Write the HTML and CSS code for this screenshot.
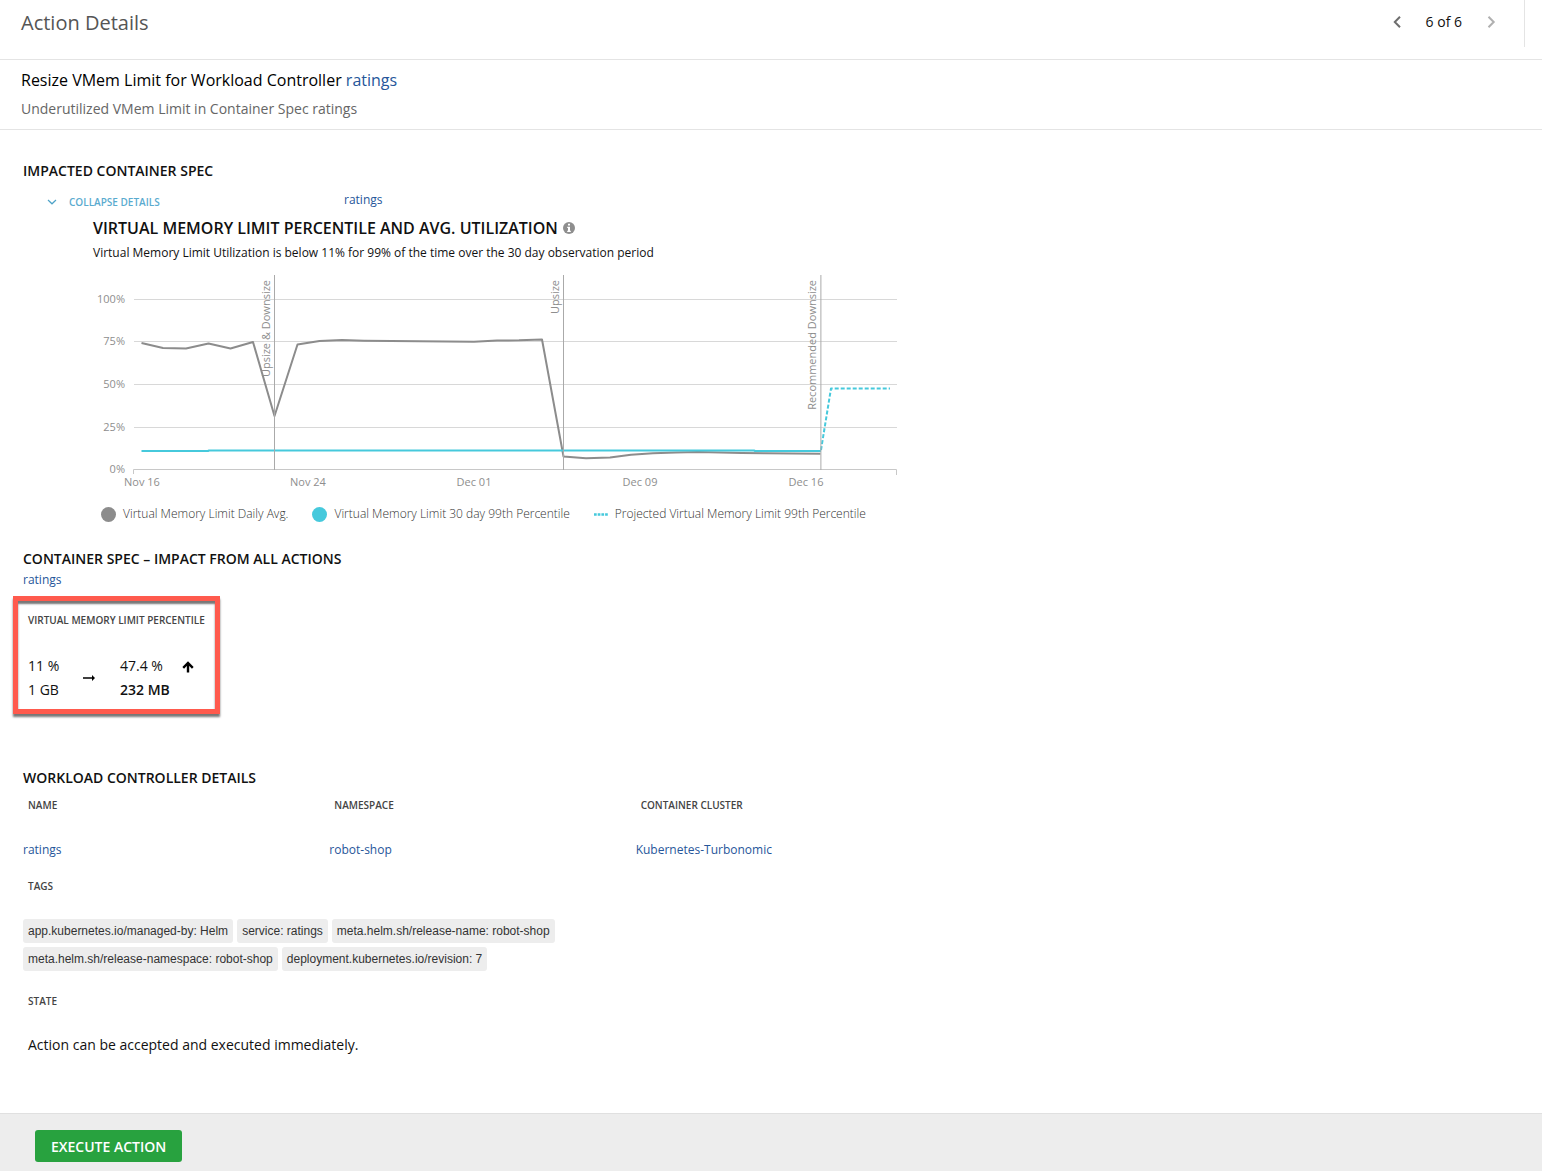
FILE: index.html
```html
<!DOCTYPE html>
<html lang="en">
<head>
<meta charset="utf-8">
<title>Action Details</title>
<link rel="stylesheet" href="styles.css">
</head>
<body>
<header class="topbar">
  <h1 class="topbar-title">Action Details</h1>
  <nav class="pager" aria-label="Actions">
    <button class="pager-button" type="button" aria-label="Previous action">
      <svg width="10" height="14" viewBox="0 0 10 14"><path d="M8 1.800 2.800 7 8 12.200" fill="none" stroke="#6e6e6e" stroke-width="2"/></svg>
    </button>
    <span class="pager-count">6 of 6</span>
    <button class="pager-button" type="button" aria-label="Next action" disabled>
      <svg width="10" height="14" viewBox="0 0 10 14"><path d="M2.500 1.800 7.700 7 2.500 12.200" fill="none" stroke="#b0b0b0" stroke-width="2"/></svg>
    </button>
  </nav>
</header>

<section class="summary">
  <h2 class="summary-title">Resize VMem Limit for Workload Controller <a class="link" href="#">ratings</a></h2>
  <p class="summary-text">Underutilized VMem Limit in Container Spec ratings</p>
</section>

<main class="content">
  <section class="impacted">
    <h3 class="section-title">IMPACTED CONTAINER SPEC</h3>
    <div class="spec-row">
      <button class="collapse" type="button">
        <svg width="10" height="6" viewBox="0 0 10 6"><path d="M1 1 5 4.800 9 1" fill="none" stroke="#4ea3c8" stroke-width="1.200"/></svg>
        COLLAPSE DETAILS
      </button>
      <a class="link" href="#">ratings</a>
    </div>

    <div class="chart">
      <h4 class="chart-title">VIRTUAL MEMORY LIMIT PERCENTILE AND AVG. UTILIZATION
        <svg class="info" width="12" height="12" viewBox="0 0 12 12"><circle cx="6" cy="6" r="6" fill="#8e8e8e"/><path d="M5 1.700h2v1.800H5zM4.200 4.700H7v4h.8V10H4.200V8.700H5V6h-.8z" fill="#fff"/></svg>
      </h4>
      <p class="chart-text">Virtual Memory Limit Utilization is below 11% for 99% of the time over the 30 day observation period</p>
      <svg class="plot" width="810" height="228" viewBox="90 265 810 228" role="img" aria-label="Memory limit utilization over time">
        <g class="grid">
          <path d="M134 299.500H897M134 341.500H897M134 384.500H897M134 427.500H897"/>
          <path class="axis" d="M133.500 474v-4.500H896.500V475"/>
        </g>
        <g class="tick tick-y">
          <text x="125" y="303">100%</text>
          <text x="125" y="345">75%</text>
          <text x="125" y="388">50%</text>
          <text x="125" y="431">25%</text>
          <text x="125" y="473">0%</text>
        </g>
        <g class="tick tick-x">
          <text x="142" y="486">Nov 16</text>
          <text x="308" y="486">Nov 24</text>
          <text x="474" y="486">Dec 01</text>
          <text x="640" y="486">Dec 09</text>
          <text x="806" y="486">Dec 16</text>
        </g>
        <polyline class="average" points="141.500,343 163,348 186,348.500 208.500,343.500 230.500,348.500 253,342 274.500,416 297.500,344.500 319.500,341 342,340 364,340.700 474,341.800 497,340.500 519,340.300 542,339.500 563.500,456.500 586,458.200 610,457.500 631,454.700 653,453.200 676,452.400 698,452 720,452.500 742,453 765,453.300 820.500,453.700"/>
        <polyline class="percentile" points="141.500,451 208,451 209,450.500 754,450.500 755,451 821,451"/>
        <polyline class="projected" points="821,450 831,388.500 890,388.500"/>
        <path class="marker" d="M274.500 275V470M563.500 275V470M820.900 275V470"/>
        <g class="marker-label">
          <text transform="translate(270 280) rotate(-90)">Upsize &amp; Downsize</text>
          <text transform="translate(559 280) rotate(-90)">Upsize</text>
          <text transform="translate(816 280) rotate(-90)">Recommended Downsize</text>
        </g>
      </svg>
      <ul class="legend">
        <li><span class="dot dot-average"></span>Virtual Memory Limit Daily Avg.</li>
        <li><span class="dot dot-percentile"></span>Virtual Memory Limit 30 day 99th Percentile</li>
        <li><svg width="14" height="3" viewBox="0 0 14 3"><path d="M0 1.500H14" stroke="#46c9dc" stroke-width="2.500" stroke-dasharray="2.700 1"/></svg>Projected Virtual Memory Limit 99th Percentile</li>
      </ul>
    </div>
  </section>

  <section class="impact">
    <h3 class="section-title">CONTAINER SPEC – IMPACT FROM ALL ACTIONS</h3>
    <p class="impact-target"><a class="link" href="#">ratings</a></p>
    <div class="change">
      <h4 class="label">VIRTUAL MEMORY LIMIT PERCENTILE</h4>
      <div class="change-values">
        <div class="change-from"><span>11 %</span><span>1 GB</span></div>
        <svg class="arrow-right" width="12" height="6" viewBox="0 0 12 6"><path d="M0 2.200H9V0l3 3-3 3V3.800H0z"/></svg>
        <div class="change-to"><span>47.4 %</span><strong>232 MB</strong></div>
        <svg class="arrow-up" width="12" height="12" viewBox="0 0 12 12"><path d="M6 2V11.500M1.200 6.800 6 2l4.800 4.800" fill="none" stroke="#000" stroke-width="2.400"/></svg>
      </div>
    </div>
  </section>

  <section class="details">
    <h3 class="section-title">WORKLOAD CONTROLLER DETAILS</h3>
    <table class="facts">
      <thead><tr><th class="label">NAME</th><th class="label">NAMESPACE</th><th class="label">CONTAINER CLUSTER</th></tr></thead>
      <tbody><tr><td><a class="link" href="#">ratings</a></td><td><a class="link" href="#">robot-shop</a></td><td><a class="link" href="#">Kubernetes-Turbonomic</a></td></tr></tbody>
    </table>
    <h4 class="label">TAGS</h4>
    <ul class="tags">
      <li>app.kubernetes.io/managed-by: Helm</li>
      <li>service: ratings</li>
      <li>meta.helm.sh/release-name: robot-shop</li>
      <li>meta.helm.sh/release-namespace: robot-shop</li>
      <li>deployment.kubernetes.io/revision: 7</li>
    </ul>
    <h4 class="label">STATE</h4>
    <p class="state">Action can be accepted and executed immediately.</p>
  </section>
</main>

<footer class="actions">
  <button class="execute" type="button">EXECUTE ACTION</button>
</footer>
</body>
</html>
```
FILE: styles.css
```css
* { box-sizing: border-box; }
body {
  margin: 0;
  min-height: 100vh;
  display: flex;
  flex-direction: column;
  background: #fff;
  color: #111;
  font: 14px/20px "Open Sans", "Noto Sans", sans-serif;
}
h1, h2, h3, h4, p, ul { margin: 0; padding: 0; font-weight: 400; }
ul { list-style: none; }
svg { display: block; flex: none; }
button { font: inherit; border: 0; background: none; padding: 0; }
.link { color: #26569a; text-decoration: none; }

.topbar {
  display: flex;
  justify-content: space-between;
  height: 60px;
  padding-left: 21px;
  padding-right: 17px;
  border-bottom: 1px solid #e4e4e4;
}
.topbar-title { padding-top: 8px; font-size: 20px; line-height: 30px; color: #555; }
.pager {
  display: flex;
  align-items: center;
  gap: 24px;
  height: 47px;
  padding-right: 28px;
  padding-bottom: 3px;
  border-right: 1px solid #e4e4e4;
}
.pager-button { display: flex; }

.summary { padding: 9px 21px 10px; border-bottom: 1px solid #e4e4e4; }
.summary-title { font-size: 16px; line-height: 22px; color: #000; }
.summary-text { padding-top: 8px; color: #666; }

.content { flex: 1; padding: 31px 23px 0; font-size: 12px; }
.section-title { font-size: 14px; line-height: 20px; font-weight: 600; }

.spec-row { display: flex; align-items: flex-start; padding: 8px 0 0 24px; line-height: 22px; }
.collapse {
  display: flex;
  align-items: center;
  gap: 12px;
  width: 297px;
  padding-top: 2px;
  font-size: 10px;
  font-weight: 600;
  color: #5aabcf;
}

.chart { padding-left: 70px; }
.chart-title { display: flex; align-items: center; gap: 5px; font-size: 16px; line-height: 22px; font-weight: 600; padding-top: 4px; }
.chart-text { padding-top: 4px; }
.plot { margin: 2px 0 0 -3px; }
.grid path { fill: none; stroke: #d8d8d8; }
.grid .axis { stroke: #c8c8c8; }
.tick text { font-size: 11px; fill: #8e8e8e; }
.tick-y text { text-anchor: end; }
.tick-x text { text-anchor: middle; }
.average, .percentile, .projected { fill: none; stroke-width: 2; stroke-linejoin: round; }
.average { stroke: #8c8c8c; }
.percentile { stroke: #46c9dc; }
.projected { stroke: #46c9dc; stroke-dasharray: 4 2; }
.marker { stroke: #aaa; }
.marker-label text { font-size: 11px; fill: #8e8e8e; text-anchor: end; }
.legend { display: flex; gap: 24px; padding: 11px 0 0 8px; font-weight: 300; color: #333; }
.legend li { display: flex; align-items: center; gap: 7px; }
.dot { width: 15px; height: 15px; border-radius: 50%; }
.dot-average { background: #8c8c8c; }
.dot-percentile { background: #46c9dc; }

.impact { padding-top: 25px; }
.impact-target { padding-top: 1px; }
.label { font-size: 10px; line-height: 16px; font-weight: 600; color: #444; padding-left: 5px; }
.change {
  width: 207px;
  height: 118px;
  margin: 6px 0 0 -10px;
  padding: 11px 10px 0 5px;
  border: 5px solid #ff5a4d;
  box-shadow: 0 3px 2px #777, inset 0 3px 2px #777;
  font-size: 14px;
  line-height: 24px;
}
.change-values { display: flex; align-items: center; padding: 26px 0 0 5px; }
.change-from, .change-to { display: flex; flex-direction: column; }
.change-from { width: 55px; }
.change-to { width: 62px; margin-left: 25px; }
.change strong { font-weight: 600; }
.arrow-up { align-self: flex-start; margin-top: 7px; }

.details { padding-top: 54px; }
.facts { width: 100%; max-width: 919px; table-layout: fixed; border-collapse: collapse; margin-top: 9px; }
.facts th { text-align: left; padding: 0 0 0 5px; }
.facts td { padding: 28px 0 19px; line-height: 18px; }
.tags {
  display: flex;
  flex-wrap: wrap;
  gap: 4px;
  max-width: 540px;
  padding: 25px 0 22px;
  font: 12px/24px "Liberation Sans", sans-serif;
  color: #333;
}
.tags li { padding: 0 5px; border-radius: 3px; background: #ededed; }
.state { padding: 26px 5px 40px; font-size: 14px; }

.actions { padding: 16px 35px 9px; background: #ededed; border-top: 1px solid #e0e0e0; }
.execute { height: 32px; padding: 1px 16px 0; border-radius: 3px; background: #28a23f; color: #fff; font-weight: 600; }
```
